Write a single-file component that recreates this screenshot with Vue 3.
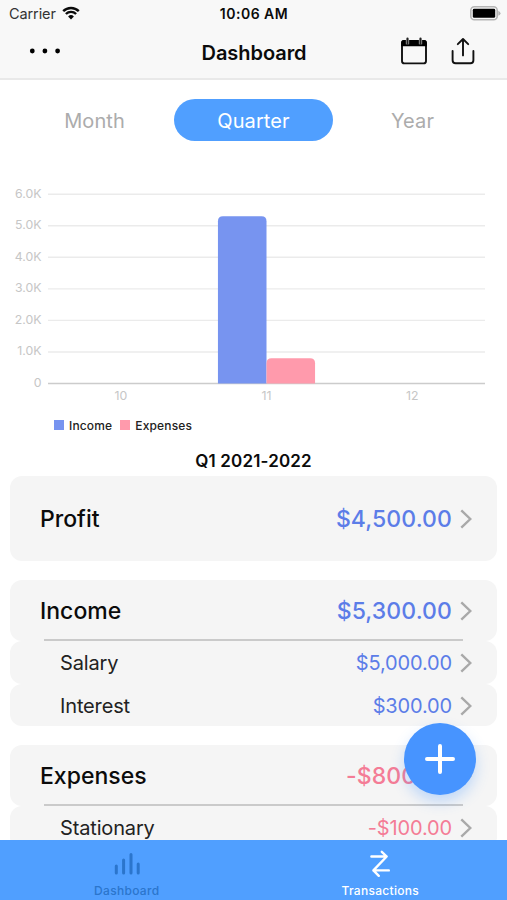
<script setup>
import { computed, ref } from 'vue'

const periods = ['Month', 'Quarter', 'Year']
const period = ref('Quarter')

const months = [
  { label: '10', income: 0, expenses: 0 },
  { label: '11', income: 5300, expenses: 800 },
  { label: '12', income: 0, expenses: 0 }
]

const groups = [
  { name: 'Profit', amount: '$4,500.00', type: 'income', items: [] },
  {
    name: 'Income',
    amount: '$5,300.00',
    type: 'income',
    items: [
      { name: 'Salary', amount: '$5,000.00' },
      { name: 'Interest', amount: '$300.00' }
    ]
  },
  {
    name: 'Expenses',
    amount: '-$800.00',
    type: 'expenses',
    items: [{ name: 'Stationary', amount: '-$100.00' }]
  }
]

// chart geometry
const left = 48
const right = 485
const base = 213.5
const step = 31.55
const slot = (right - left) / months.length
const barWidth = slot / 3

const ticks = [6, 5, 4, 3, 2, 1, 0].map(n => ({
  label: n ? n.toFixed(1) + 'K' : '0',
  y: base - n * step
}))

// rounded only on the top corners
function barPath(x, value) {
  const h = (value / 1000) * step
  const r = 5
  return `M${x} ${base}v${-(h - r)}q0 ${-r} ${r} ${-r}h${barWidth - 2 * r}q${r} 0 ${r} ${r}v${h - r}z`
}

const bars = computed(() =>
  months.flatMap((m, i) => {
    const center = left + slot * (i + 0.5)
    return [
      { type: 'income', x: center - barWidth, value: m.income },
      { type: 'expenses', x: center, value: m.expenses }
    ].filter(b => b.value > 0)
  })
)
</script>

<template>
  <div class="screen">
    <header class="header">
      <div class="status-bar">
        <div class="carrier">
          <span>Carrier</span>
          <svg class="wifi" viewBox="0 0 18 14">
            <path d="M1.2 5.2a11 11 0 0 1 15.6 0" />
            <path d="M3.9 8a7.2 7.2 0 0 1 10.2 0" />
            <path class="wifi-dot" d="M6.1 10.4a4.1 4.1 0 0 1 5.8 0L9 13.4z" />
          </svg>
        </div>
        <span class="time">10:06 AM</span>
        <div class="battery-wrap">
          <svg class="battery" viewBox="0 0 31 15">
            <rect class="battery-case" x="0.8" y="0.8" width="26.4" height="13" rx="3.6" />
            <rect x="2.8" y="2.8" width="22.4" height="9" rx="1.4" />
            <path class="battery-tip" d="M28.3 4.8q2.2 1 2.2 2.5t-2.2 2.5z" />
          </svg>
        </div>
      </div>

      <div class="nav-bar">
        <button class="icon-btn menu">
          <svg viewBox="0 0 32 6">
            <circle cx="3.3" cy="3" r="2.4" />
            <circle cx="15.9" cy="3" r="2.4" />
            <circle cx="28.6" cy="3" r="2.4" />
          </svg>
        </button>
        <h1 class="title">Dashboard</h1>
        <div class="actions">
          <button class="icon-btn calendar">
            <svg viewBox="0 0 28 28">
              <rect class="line" x="2" y="4" width="24" height="22.4" rx="2.4" />
              <path d="M1.2 9.2V5.6q0-2.6 2.6-2.6h20.4q2.6 0 2.6 2.6v3.6z" />
              <path class="ring-gap" d="M7.5 1.8v5.4M20.5 1.8v5.4" />
              <path class="ring" d="M7.5 1.6v5.4M20.5 1.6v5.4" />
            </svg>
          </button>
          <button class="icon-btn share">
            <svg viewBox="0 0 24 28">
              <path class="line" d="M1.6 14v9.2q0 3 3 3h14.8q3 0 3-3V14" />
              <path class="line" d="M12 18.4V2.2M6.8 7.2L12 2l5.2 5.2" />
            </svg>
          </button>
        </div>
      </div>
    </header>

    <main class="content">
      <div class="periods">
        <button
          v-for="p in periods"
          :key="p"
          class="period"
          :class="{ active: p === period }"
          @click="period = p"
        >{{ p }}</button>
      </div>

      <svg class="chart" viewBox="0 0 507 240">
        <g v-for="t in ticks" :key="t.label">
          <line :class="t.label === '0' ? 'axis' : 'grid'" :x1="left" :x2="right" :y1="t.y" :y2="t.y" />
          <text class="tick" x="41.5" :y="t.y + 3.4" text-anchor="end">{{ t.label }}</text>
        </g>
        <path v-for="b in bars" :key="b.type" :class="'bar-' + b.type" :d="barPath(b.x, b.value)" />
        <text
          v-for="(m, i) in months"
          :key="m.label"
          class="tick"
          :x="left + slot * (i + 0.5)"
          y="230.3"
          text-anchor="middle"
        >{{ m.label }}</text>
      </svg>

      <div class="legend">
        <span class="legend-item"><i class="swatch income"></i>Income</span>
        <span class="legend-item"><i class="swatch expenses"></i>Expenses</span>
      </div>

      <h2 class="range">Q1 2021-2022</h2>

      <section v-for="g in groups" :key="g.name" class="group">
        <div class="row main" :class="{ single: !g.items.length }">
          <span class="name">{{ g.name }}</span>
          <span class="amount" :class="g.type">{{ g.amount }}</span>
          <svg class="chevron" viewBox="0 0 12 20"><path d="M1.3 1.3L10.3 10l-9 8.7" /></svg>
        </div>
        <div v-if="g.items.length" class="divider"></div>
        <div v-for="item in g.items" :key="item.name" class="row sub">
          <span class="name">{{ item.name }}</span>
          <span class="amount" :class="g.type">{{ item.amount }}</span>
          <svg class="chevron" viewBox="0 0 12 20"><path d="M1.3 1.3L10.3 10l-9 8.7" /></svg>
        </div>
      </section>
    </main>

    <button class="add-btn">
      <svg viewBox="0 0 30 30"><path d="M15 2v26M2 15h26" /></svg>
    </button>

    <nav class="tab-bar">
      <button class="tab current">
        <svg viewBox="0 0 28 24" class="tab-icon stats">
          <path d="M3.3 14v7M10.6 8v13M18 2.5v18.5M25.2 12v9" />
        </svg>
        <span>Dashboard</span>
      </button>
      <button class="tab">
        <svg viewBox="0 0 20 28" class="tab-icon swap">
          <path d="M1.4 6.5h15.2M11.8 1.8l4.9 4.7L3.4 20.4l5.4 5.4M3.4 20.4h15.4" />
        </svg>
        <span>Transactions</span>
      </button>
    </nav>
  </div>
</template>

<style>
body {
  margin: 0;
  background: #ffffff;
}
</style>

<style scoped>
.screen {
  position: relative;
  display: flex;
  flex-direction: column;
  height: 900px;
  overflow: hidden;
  background: #ffffff;
  color: #0b0b0b;
  font-family: Inter, "Liberation Sans", sans-serif;
}

button {
  padding: 0;
  border: none;
  background: none;
  font-family: inherit;
  cursor: pointer;
}

svg {
  display: block;
}

/* header */
.header {
  box-sizing: border-box;
  flex: none;
  height: 80px;
  background: #f8f8f8;
  border-bottom: 2px solid #e9e9e9;
}

.status-bar {
  display: grid;
  grid-template-columns: 1fr auto 1fr;
  align-items: center;
  height: 27px;
  padding: 0 6px 0 9px;
  font-size: 14.5px;
}

.carrier {
  display: flex;
  align-items: center;
  gap: 6px;
  color: #333333;
  letter-spacing: -0.1px;
}

.wifi {
  width: 18px;
  height: 14px;
  margin-top: -1px;
  fill: none;
  stroke: #0b0b0b;
  stroke-width: 2.4;
}

.wifi-dot {
  fill: #0b0b0b;
  stroke: none;
}

.time {
  font-size: 14px;
  font-weight: 600;
  letter-spacing: 0.5px;
  margin-right: 2px;
}

.battery-wrap {
  display: flex;
  justify-content: flex-end;
}

.battery {
  width: 31px;
  height: 15px;
}

.battery-case {
  fill: #f8f8f8;
  stroke: #b5b5b5;
  stroke-width: 1.6;
}

.battery-tip {
  fill: #b5b5b5;
}

.nav-bar {
  display: grid;
  grid-template-columns: 1fr auto 1fr;
  align-items: center;
  height: 51px;
  padding: 0 32px 0 29px;
}

.menu svg {
  width: 32px;
  height: 6px;
  margin-top: -3px;
}

.title {
  margin: 0 0 0 4px;
  font-size: 20px;
  font-weight: 600;
  letter-spacing: -0.05px;
}

.actions {
  display: flex;
  justify-content: flex-end;
  gap: 23px;
  padding-bottom: 3px;
}

.calendar svg {
  width: 28px;
  height: 28px;
}

.share svg {
  width: 24px;
  height: 28px;
}

.line {
  fill: none;
  stroke: #111111;
  stroke-width: 1.9;
  stroke-linecap: round;
  stroke-linejoin: round;
}

.ring-gap {
  stroke: #f8f8f8;
  stroke-width: 3.2;
}

.ring {
  stroke: #222222;
  stroke-width: 2.2;
  stroke-linecap: round;
}

/* period switch */
.content {
  flex: 1;
  min-height: 0;
  overflow: hidden;
}

.periods {
  display: flex;
  padding: 19px 15px 0;
}

.period {
  flex: 1;
  height: 42px;
  padding-top: 1px;
  border-radius: 21px;
  font-size: 20px;
  letter-spacing: 0.1px;
  color: #acacac;
}

.period.active {
  background: #509fff;
  color: #ffffff;
}

/* chart */
.chart {
  width: 507px;
  height: 240px;
  margin-top: 29px;
}

.grid {
  stroke: #ebebeb;
  stroke-width: 1.4;
}

.axis {
  stroke: #cccccc;
  stroke-width: 1.6;
}

.tick {
  fill: #c6c6c6;
  font-size: 12.3px;
}

.bar-income {
  fill: #7794f0;
}

.bar-expenses {
  fill: #ff9aac;
}

.legend {
  display: flex;
  gap: 8px;
  height: 30px;
  align-items: center;
  padding-left: 54px;
  font-size: 12px;
  font-weight: 500;
  letter-spacing: 0.15px;
  color: #222222;
}

.legend-item {
  display: flex;
  align-items: center;
  gap: 5px;
}

.swatch {
  width: 10px;
  height: 10px;
}

.swatch.income {
  background: #7794f0;
}

.swatch.expenses {
  background: #ff9aac;
}

.range {
  margin: 10px 0 4px;
  height: 22px;
  line-height: 22px;
  text-align: center;
  font-size: 17px;
  font-weight: 600;
  letter-spacing: 0.15px;
}

/* summary list */
.group {
  margin: 0 10px 19px;
}

.row {
  display: flex;
  align-items: center;
  box-sizing: border-box;
  padding: 0 25px 0 30px;
  border-radius: 12px;
  background: #f5f5f5;
}

.row.main {
  height: 61px;
  font-size: 23px;
  font-weight: 500;
}

.row.main.single {
  height: 85px;
}

.row.sub {
  height: 42.5px;
  padding-top: 2px;
  padding-left: 50px;
  font-size: 20px;
  letter-spacing: -0.15px;
  color: #222222;
}

.name {
  flex: 1;
}

.amount.income {
  color: #5c7de8;
}

.amount.expenses {
  color: #f47c96;
}

.row.main .amount {
  letter-spacing: 0.1px;
}

.row.sub .amount {
  letter-spacing: -0.15px;
}

.chevron {
  width: 12px;
  height: 20px;
  margin-left: 8px;
  fill: none;
  stroke: #a9a9a9;
  stroke-width: 2.4;
}

/* sits on the bottom edge of the main row */
.divider {
  height: 2px;
  margin: -2px 34px 0;
  background: #cacaca;
}

/* floating button */
.add-btn {
  position: absolute;
  right: 31px;
  bottom: 105px;
  display: flex;
  align-items: center;
  justify-content: center;
  width: 72px;
  height: 72px;
  border-radius: 50%;
  background: #4794ff;
  box-shadow: 0 7px 14px rgba(71, 148, 255, 0.3);
}

.add-btn svg {
  width: 30px;
  height: 30px;
  stroke: #ffffff;
  stroke-width: 4;
  stroke-linecap: round;
}

/* bottom tabs */
.tab-bar {
  display: flex;
  flex: none;
  height: 60px;
  background: #509fff;
}

.tab {
  flex: 1;
  display: flex;
  flex-direction: column;
  align-items: center;
  justify-content: flex-end;
  color: #ffffff;
  font-size: 12px;
  font-weight: 500;
  letter-spacing: 0.3px;
  line-height: 14px;
  padding-bottom: 2px;
}

.tab.current {
  color: #2b75cc;
}

.tab-icon {
  fill: none;
  stroke: currentColor;
  stroke-linecap: round;
  stroke-linejoin: round;
}

.stats {
  width: 28px;
  height: 24px;
  margin-bottom: 8px;
  stroke-width: 3;
}

.swap {
  width: 20px;
  height: 28px;
  margin-bottom: 6px;
  stroke-width: 2.4;
}
</style>
